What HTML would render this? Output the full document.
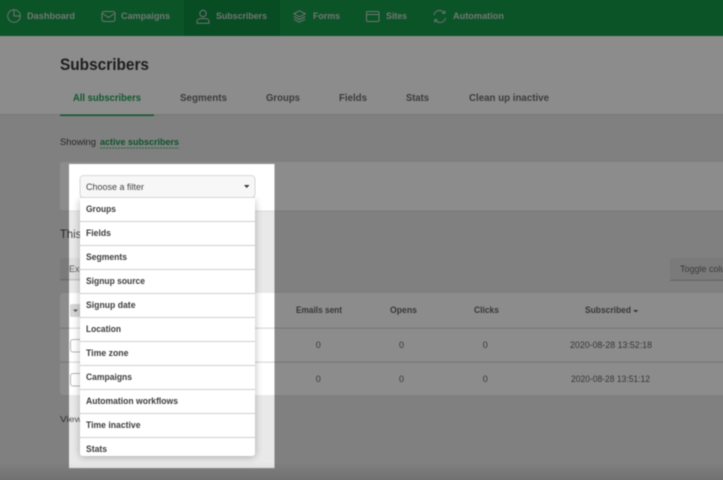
<!DOCTYPE html>
<html><head><meta charset="utf-8"><title>Subscribers</title>
<style>
html,body{margin:0;padding:0;width:723px;height:480px;overflow:hidden;background:#808080}
svg{display:block;position:absolute;left:0;top:0}
text{font-family:"Liberation Sans",sans-serif}
.b{font-weight:bold}
.nav{font-size:9px;font-weight:bold;fill:#d2d8d4}
.tab{font-size:10px;font-weight:bold;fill:#6e6e6e}
.th{font-size:9px;font-weight:bold;fill:#666}
.td{font-size:9px;fill:#666}
.it{font-size:9px;font-weight:bold;fill:#3c3c3c}
.ic{fill:none;stroke:#ccd4cf;stroke-width:1}
</style></head><body>
<svg width="723" height="480" viewBox="0 0 723 480" xmlns="http://www.w3.org/2000/svg">
<defs>
<filter id="bl" filterUnits="userSpaceOnUse" x="-30" y="-30" width="783" height="540" color-interpolation-filters="sRGB"><feGaussianBlur stdDeviation="0.45"/></filter>
<filter id="sh" x="-20%" y="-20%" width="140%" height="140%" color-interpolation-filters="sRGB"><feGaussianBlur stdDeviation="4"/></filter>
<linearGradient id="bt" x1="0" y1="0" x2="0" y2="1"><stop offset="0" stop-color="#000" stop-opacity="0"/><stop offset="1" stop-color="#000" stop-opacity=".12"/></linearGradient>
</defs>
<g filter="url(#bl)">
<!-- page -->
<rect x="-20" y="-20" width="763" height="520" fill="#e9e9e9"/>
<rect x="-20" y="-20" width="763" height="56" fill="#149a4a"/>
<rect x="184" y="-20" width="96" height="56" fill="#0d8a40"/>
<rect x="-20" y="36" width="763" height="79" fill="#ffffff"/>
<rect x="-20" y="114" width="763" height="1" fill="#dcdcdc"/>
<!-- nav icons -->
<g class="ic">
<circle cx="14" cy="16" r="6.300"/><path d="M14 9.700V16H20.300"/>
<rect x="102" y="11.500" width="13" height="10" rx="2"/><path d="M102.500 13.500L108.500 17.500L114.500 13.500"/>
<circle cx="203" cy="13.500" r="3.200"/><path d="M197 23.300V21.500C197 19.600 198.500 18.600 200.300 18.600H205.700C207.500 18.600 209 19.600 209 21.500V23.300Z"/>
<path d="M299.500 10.800L293.800 13.800L299.500 16.800L305.200 13.800Z"/><path d="M293.800 16.500L299.500 19.500L305.200 16.500"/><path d="M293.800 19.200L299.500 22.200L305.200 19.200"/>
<rect x="366.500" y="11.500" width="12.500" height="10" rx="1"/><path d="M366.500 14.500H379"/>
<path d="M434 15C434.600 12 437 10.500 439.500 10.500C441.500 10.500 443 11.300 444 12.800M444.800 10.500V13.300H442"/><path d="M445.500 18C444.900 21 442.500 22.500 440 22.500C438 22.500 436.500 21.700 435.500 20.200M434.700 22.500V19.700H437.500"/>
</g>
<!-- nav labels -->
<text class="nav" x="27" y="19" textLength="48" lengthAdjust="spacingAndGlyphs">Dashboard</text>
<text class="nav" x="121" y="19" textLength="49" lengthAdjust="spacingAndGlyphs">Campaigns</text>
<text class="nav" x="216" y="19" textLength="51" lengthAdjust="spacingAndGlyphs">Subscribers</text>
<text class="nav" x="313" y="19" textLength="27" lengthAdjust="spacingAndGlyphs">Forms</text>
<text class="nav" x="386" y="19" textLength="21" lengthAdjust="spacingAndGlyphs">Sites</text>
<text class="nav" x="453" y="19" textLength="51" lengthAdjust="spacingAndGlyphs">Automation</text>
<!-- heading -->
<text x="60" y="70" class="b" font-size="17" fill="#3a3a3a" textLength="89" lengthAdjust="spacingAndGlyphs">Subscribers</text>
<!-- tabs -->
<text class="tab" x="73" y="101" style="fill:#1fa055" textLength="68" lengthAdjust="spacingAndGlyphs">All subscribers</text>
<text class="tab" x="180" y="101" textLength="47" lengthAdjust="spacingAndGlyphs">Segments</text>
<text class="tab" x="266" y="101" textLength="34" lengthAdjust="spacingAndGlyphs">Groups</text>
<text class="tab" x="339" y="101" textLength="28" lengthAdjust="spacingAndGlyphs">Fields</text>
<text class="tab" x="406" y="101" textLength="23" lengthAdjust="spacingAndGlyphs">Stats</text>
<text class="tab" x="469" y="101" textLength="80" lengthAdjust="spacingAndGlyphs">Clean up inactive</text>
<rect x="60" y="114.500" width="94" height="1.500" fill="#1fa055"/>
<!-- showing -->
<text x="60" y="145" font-size="9.500" fill="#444" textLength="36" lengthAdjust="spacingAndGlyphs">Showing</text>
<text x="100" y="145" class="b" font-size="9.500" fill="#149a4a" textLength="79" lengthAdjust="spacingAndGlyphs">active subscribers</text>
<path d="M100 148H179" stroke="#149a4a" stroke-width=".7" stroke-dasharray="2 1" fill="none"/>
<!-- filter card -->
<rect x="60" y="162" width="700" height="49" rx="3" fill="#fff"/>
<rect x="60" y="210.500" width="700" height="1" fill="#dcdcdc"/>
<!-- middle -->
<text x="60" y="238" font-size="12" fill="#444" textLength="38" lengthAdjust="spacingAndGlyphs">This list</text>
<rect x="60" y="258" width="60" height="22" rx="3" fill="#dedede"/>
<rect x="60" y="279" width="60" height="1.500" fill="#c4c4c4"/>
<text x="69" y="272" font-size="9" fill="#5a5a5a">Export</text>
<rect x="670" y="258" width="90" height="22" rx="3" fill="#dedede"/>
<rect x="670" y="279.500" width="90" height="1.500" fill="#c4c4c4"/>
<text x="680" y="272" font-size="9" fill="#6e6e6e">Toggle columns</text>
<!-- table -->
<rect x="60" y="293" width="700" height="102" rx="3" fill="#fff"/>
<rect x="60" y="327.500" width="700" height="1.300" fill="#dcdcdc"/>
<rect x="60" y="361.500" width="700" height="1.300" fill="#dcdcdc"/>
<rect x="70" y="304" width="14" height="13" rx="2" fill="#d6d6d6"/>
<path d="M73 309.500H78L75.500 312Z" fill="#555"/>
<rect x="70.500" y="339.500" width="14" height="12.500" rx="2.500" fill="#fff" stroke="#b5b5b5"/>
<rect x="70.500" y="373.500" width="14" height="12.500" rx="2.500" fill="#fff" stroke="#b5b5b5"/>
<text class="th" x="296" y="313" textLength="46" lengthAdjust="spacingAndGlyphs">Emails sent</text>
<text class="th" x="390" y="313" textLength="27" lengthAdjust="spacingAndGlyphs">Opens</text>
<text class="th" x="474" y="313" textLength="25" lengthAdjust="spacingAndGlyphs">Clicks</text>
<text class="th" x="585" y="313" textLength="46" lengthAdjust="spacingAndGlyphs">Subscribed</text>
<path d="M633 310H638.500L635.700 312.500Z" fill="#666"/>
<text class="td" x="318.300" y="348" text-anchor="middle">0</text>
<text class="td" x="401.500" y="348" text-anchor="middle">0</text>
<text class="td" x="485.200" y="348" text-anchor="middle">0</text>
<text class="td" x="570" y="348" textLength="82" lengthAdjust="spacingAndGlyphs">2020-08-28 13:52:18</text>
<text class="td" x="318.300" y="382" text-anchor="middle">0</text>
<text class="td" x="401.500" y="382" text-anchor="middle">0</text>
<text class="td" x="485.200" y="382" text-anchor="middle">0</text>
<text class="td" x="571" y="382" textLength="79" lengthAdjust="spacingAndGlyphs">2020-08-28 13:51:12</text>
<text x="60" y="422" font-size="8.500" fill="#555" textLength="35" lengthAdjust="spacingAndGlyphs">View all</text>
<!-- dim overlay with spotlight hole -->
<path fill-rule="evenodd" fill="#000" fill-opacity=".45" d="M-20 -20H743V500H-20ZM69 164V468H274.500V164Z"/>
<rect x="-20" y="462" width="763" height="18" fill="url(#bt)"/>
<rect x="-20" y="480" width="763" height="20" fill="#000" fill-opacity=".12"/>
<path d="M69 468.300H274.500" stroke="#8a8a8a" stroke-width=".6"/>
<!-- dropdown -->
<rect x="80" y="200" width="175" height="257" rx="3" fill="#000" opacity=".28" filter="url(#sh)"/>
<rect x="80" y="175.500" width="175" height="22" rx="3.500" fill="#f7f7f7" stroke="#cfcfcf" stroke-width=".8"/>
<text x="86" y="190" font-size="9" fill="#444" textLength="58" lengthAdjust="spacingAndGlyphs">Choose a filter</text>
<path d="M244 185H249.500L246.700 188Z" fill="#333"/>
<path d="M80 197.500H255V453A3 3 0 0 1 252 456H83A3 3 0 0 1 80 453Z" fill="#fff"/>
<path d="M80 197.500H255" stroke="#cfcfcf" stroke-width=".8"/>
<g fill="#cfcfcf">
<rect x="80" y="221" width="175" height="1"/>
<rect x="80" y="245" width="175" height="1"/>
<rect x="80" y="269" width="175" height="1"/>
<rect x="80" y="293" width="175" height="1"/>
<rect x="80" y="317" width="175" height="1"/>
<rect x="80" y="341" width="175" height="1"/>
<rect x="80" y="365" width="175" height="1"/>
<rect x="80" y="389" width="175" height="1"/>
<rect x="80" y="413" width="175" height="1"/>
<rect x="80" y="437" width="175" height="1"/>
</g>
<text class="it" x="86" y="212" textLength="30" lengthAdjust="spacingAndGlyphs">Groups</text>
<text class="it" x="86" y="236" textLength="25" lengthAdjust="spacingAndGlyphs">Fields</text>
<text class="it" x="86" y="260" textLength="41" lengthAdjust="spacingAndGlyphs">Segments</text>
<text class="it" x="86" y="284" textLength="59" lengthAdjust="spacingAndGlyphs">Signup source</text>
<text class="it" x="86" y="308" textLength="49.500" lengthAdjust="spacingAndGlyphs">Signup date</text>
<text class="it" x="86" y="332" textLength="35" lengthAdjust="spacingAndGlyphs">Location</text>
<text class="it" x="86" y="356" textLength="42.500" lengthAdjust="spacingAndGlyphs">Time zone</text>
<text class="it" x="86" y="380" textLength="46" lengthAdjust="spacingAndGlyphs">Campaigns</text>
<text class="it" x="86" y="404" textLength="92" lengthAdjust="spacingAndGlyphs">Automation workflows</text>
<text class="it" x="86" y="428" textLength="54.500" lengthAdjust="spacingAndGlyphs">Time inactive</text>
<text class="it" x="86" y="452" textLength="21" lengthAdjust="spacingAndGlyphs">Stats</text>
</g>
</svg>
</body></html>
